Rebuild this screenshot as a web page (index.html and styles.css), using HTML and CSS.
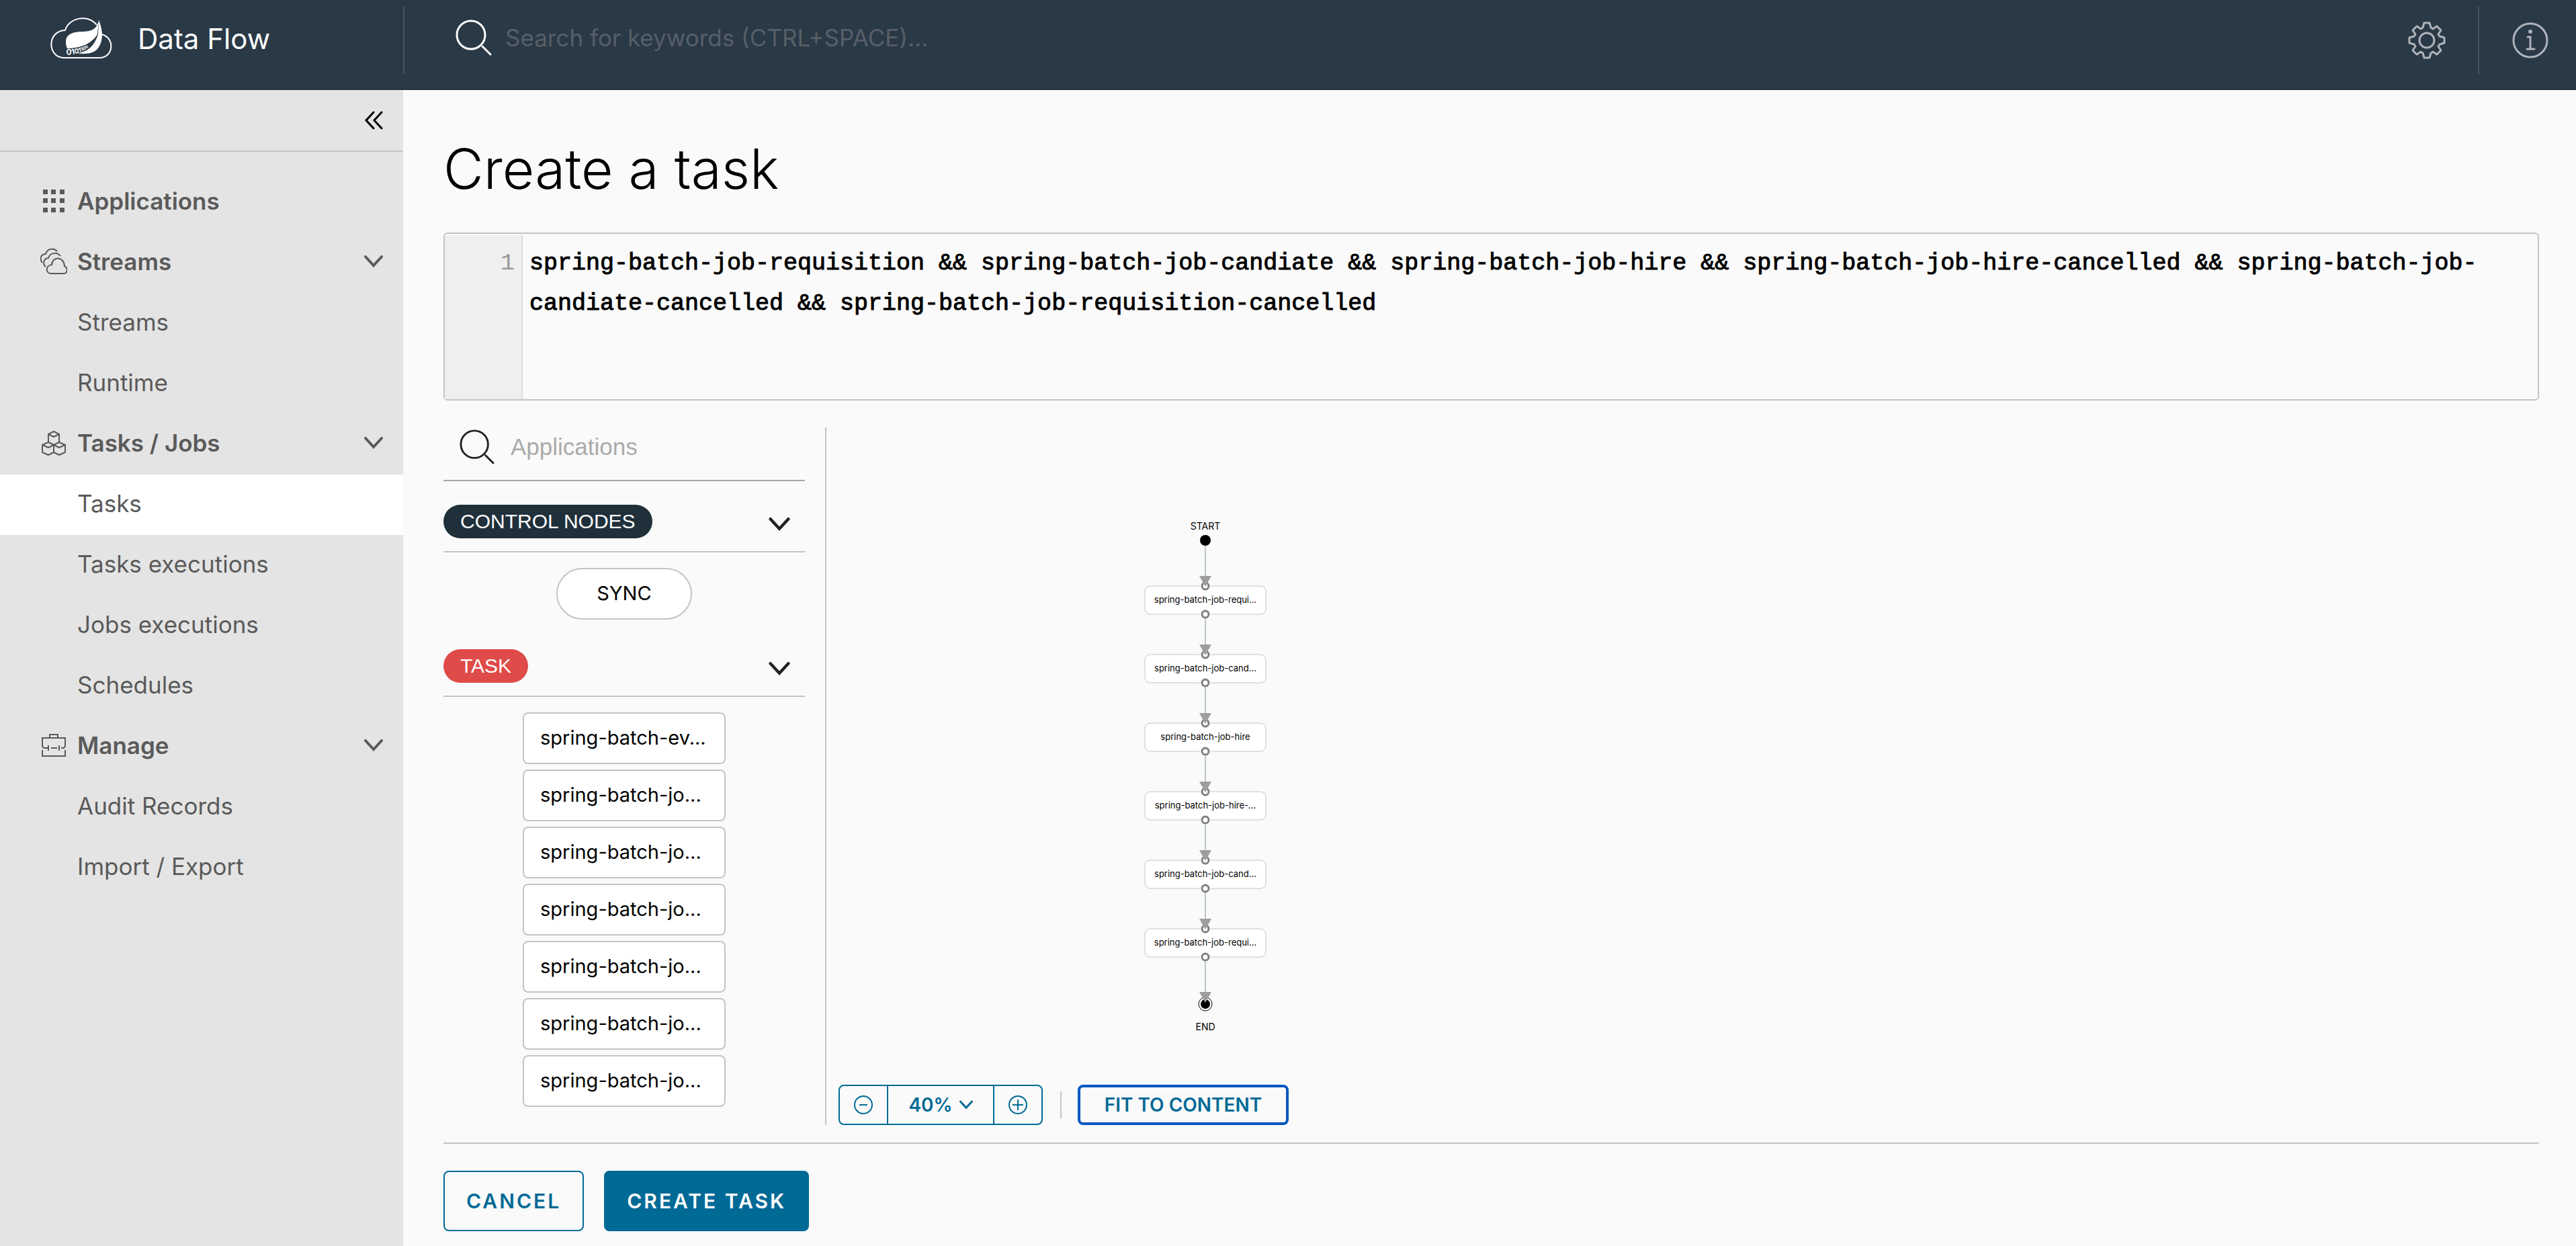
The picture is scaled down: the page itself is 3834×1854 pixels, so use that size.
FILE: index.html
```html
<!DOCTYPE html>
<html lang="en">
<head>
<meta charset="utf-8">
<title>Data Flow - Create a task</title>
<link rel="stylesheet" href="styles.css">
</head>
<body>
<svg class="defs" aria-hidden="true">
  <symbol id="chevron" viewBox="0 0 28 18"><path d="M2 2 14 15 26 2" fill="none" stroke="currentColor" stroke-width="4" stroke-linecap="round"/></symbol>
  <symbol id="magnifier" viewBox="0 0 54 54"><circle cx="23" cy="23" r="21" fill="none" stroke="currentColor" stroke-width="3"/><path d="M40 40 52 52" stroke="currentColor" stroke-width="3" stroke-linecap="round"/></symbol>
</svg>

<header class="header">
  <a class="brand" href="#">
    <svg class="brand-logo" viewBox="14 12 94 66" aria-hidden="true">
      <path d="M34 74C10 72 10 34 37 33 42 15 70 8 84 25M91 39C112 44 109 74 88 74H34" fill="none" stroke="#fff" stroke-width="2"/>
      <path d="M87 18C84 31 78 34 65 35 50 35 38 38 38 50 38 55 39 58 40 60 58 60 76 54 85 39Z" fill="#fff"/>
      <path d="M87 18C94 34 94 52 84 62 77 68 66 69 55 67 72 65 81 55 86 39Z" fill="#fff"/>
      <path id="digits" d="M39 70C60 69 76 59 85 42" fill="none"/>
      <text class="brand-digits"><textPath href="#digits"><tspan font-size="12">0</tspan><tspan font-size="11">1</tspan><tspan font-size="10">0</tspan><tspan font-size="9">1</tspan><tspan font-size="8">1</tspan><tspan font-size="7">0</tspan><tspan font-size="6">0</tspan></textPath></text>
    </svg>
    <span>Data Flow</span>
  </a>
  <form class="search">
    <label for="keywords"><svg class="search-icon" aria-label="Search"><use href="#magnifier"/></svg></label>
    <input id="keywords" type="text" placeholder="Search for keywords (CTRL+SPACE)...">
  </form>
  <div class="header-actions">
    <button class="header-button" aria-label="Settings">
      <svg viewBox="-28 -28 56 56"><g fill="none" stroke="currentColor" stroke-width="3" stroke-linejoin="round"><circle r="11"/><path d="M-4-26H4L6-19 9-17 15-21 21-15 17-9 19-6 26-4V4L19 6 17 9 21 15 15 21 9 17 6 19 4 26H-4L-6 19-9 17-15 21-21 15-17 9-19 6-26 4V-4L-19-6-17-9-21-15-15-21-9-17-6-19Z"/></g></svg>
    </button>
    <button class="header-button" aria-label="Information">
      <svg viewBox="-28 -28 56 56"><g fill="none" stroke="currentColor" stroke-width="3" stroke-linecap="round"><circle r="25"/><path d="M-4-5H0V13M-5 13H6"/></g><circle cy="-13" r="3" fill="currentColor"/></svg>
    </button>
  </div>
</header>

<div class="layout">
  <nav class="sidebar">
    <div class="sidebar-top">
      <button class="collapse" aria-label="Collapse menu"><svg viewBox="0 0 28 28"><path d="M14 2 3 14 14 26M26 2 15 14 26 26" fill="none" stroke="currentColor" stroke-width="3" stroke-linecap="round"/></svg></button>
    </div>
    <div class="menu">
      <a class="menu-group" href="#">
        <svg viewBox="0 0 40 40"><path d="M4 3h7v7H4zM16 3h7v7h-7zM29 3h7v7h-7zM4 16h7v7H4zM16 16h7v7h-7zM29 16h7v7h-7zM4 30h7v7H4zM16 30h7v7h-7zM29 30h7v7h-7z" fill="currentColor"/></svg>
        <span>Applications</span>
      </a>
      <button class="menu-group">
        <svg viewBox="0 0 40 40"><g fill="none" stroke="currentColor" stroke-width="2"><path d="M3 22C-1 17 0 9 8 9 10 1 20-1 25 5M8 28C3 24 5 15 12 15 14 7 25 5 30 12"/><path d="M16 38C8 38 7 26 17 25 18 12 35 12 36 27 42 30 40 38 35 38Z"/></g></svg>
        <span>Streams</span><svg class="chevron"><use href="#chevron"/></svg>
      </button>
      <a class="menu-item" href="#">Streams</a>
      <a class="menu-item" href="#">Runtime</a>
      <button class="menu-group">
        <svg viewBox="0 0 40 40"><g fill="none" stroke="currentColor" stroke-width="2" stroke-linejoin="round"><path d="M20 3 28 7V19L20 23 12 19V7ZM12 7 20 11 28 7M12 19 20 23V34L12 38 3 34V23ZM3 23 12 27 20 23M28 19 37 23V34L28 38 20 34V23ZM20 23 28 27 37 23"/></g></svg>
        <span>Tasks / Jobs</span><svg class="chevron"><use href="#chevron"/></svg>
      </button>
      <a class="menu-item active" href="#">Tasks</a>
      <a class="menu-item" href="#">Tasks executions</a>
      <a class="menu-item" href="#">Jobs executions</a>
      <a class="menu-item" href="#">Schedules</a>
      <button class="menu-group">
        <svg viewBox="0 0 40 40"><path d="M14 8V4H26V8M12 24H7Q3 24 3 20V9H37V20Q37 24 33 24H31M3 27V36H37V27M12 20V28M28 20V28M16 24H25" fill="none" stroke="currentColor" stroke-width="2"/></svg>
        <span>Manage</span><svg class="chevron"><use href="#chevron"/></svg>
      </button>
      <a class="menu-item" href="#">Audit Records</a>
      <a class="menu-item" href="#">Import / Export</a>
    </div>
  </nav>

  <main class="content">
    <h1>Create a task</h1>
    <div class="editor">
      <div class="gutter">1</div>
      <textarea aria-label="Task definition" spellcheck="false">spring-batch-job-requisition &amp;&amp; spring-batch-job-candiate &amp;&amp; spring-batch-job-hire &amp;&amp; spring-batch-job-hire-cancelled &amp;&amp; spring-batch-job-candiate-cancelled &amp;&amp; spring-batch-job-requisition-cancelled</textarea>
    </div>

    <div class="workspace">
      <aside class="palette">
        <div class="palette-search">
          <label for="filter"><svg class="filter-icon" aria-label="Filter"><use href="#magnifier"/></svg></label>
          <input id="filter" type="text" placeholder="Applications">
        </div>
        <button class="palette-group"><span class="pill">CONTROL NODES</span><svg class="chevron"><use href="#chevron"/></svg></button>
        <div class="palette-items">
          <button class="node sync">SYNC</button>
        </div>
        <button class="palette-group"><span class="pill task">TASK</span><svg class="chevron"><use href="#chevron"/></svg></button>
        <div class="palette-items">
          <button class="node">spring-batch-ev...</button>
          <button class="node">spring-batch-jo...</button>
          <button class="node">spring-batch-jo...</button>
          <button class="node">spring-batch-jo...</button>
          <button class="node">spring-batch-jo...</button>
          <button class="node">spring-batch-jo...</button>
          <button class="node">spring-batch-jo...</button>
        </div>
      </aside>

      <section class="canvas">
        <svg class="graph" role="img" aria-label="Task graph">
          <defs>
            <g id="box">
              <rect class="box" x="-90" width="180" height="42" rx="8"/>
              <circle class="halo" r="8"/><circle class="port" r="5"/>
              <circle class="halo" cy="42" r="8"/><circle class="port" cy="42" r="5"/>
              <path class="link" d="M0-54V-12"/><path class="arrow" d="M-9-15H9L0 1Z"/>
            </g>
          </defs>
          <g transform="translate(564 0)">
            <text y="152">START</text>
            <path class="link" d="M0 168V236"/>
            <circle cy="168" r="8"/>
            <g class="task-node" transform="translate(0 236)"><use href="#box"/><text y="25">spring-batch-job-requi...</text></g>
            <g class="task-node" transform="translate(0 338)"><use href="#box"/><text y="25">spring-batch-job-cand...</text></g>
            <g class="task-node" transform="translate(0 440)"><use href="#box"/><text y="25">spring-batch-job-hire</text></g>
            <g class="task-node" transform="translate(0 542)"><use href="#box"/><text y="25">spring-batch-job-hire-...</text></g>
            <g class="task-node" transform="translate(0 644)"><use href="#box"/><text y="25">spring-batch-job-cand...</text></g>
            <g class="task-node" transform="translate(0 746)"><use href="#box"/><text y="25">spring-batch-job-requi...</text></g>
            <path class="link" d="M0 794V846"/>
            <circle class="end-ring" cy="858" r="10"/><circle cy="858" r="7"/>
            <path class="arrow" d="M-9 840H9L0 856Z"/>
            <text y="897">END</text>
          </g>
        </svg>
        <div class="toolbar">
          <div class="zoom">
            <button aria-label="Zoom out"><svg class="zoom-icon" viewBox="0 0 28 28"><path d="M8 14H20" /><circle cx="14" cy="14" r="13"/></svg></button>
            <button class="level">40% <svg class="level-chevron"><use href="#chevron"/></svg></button>
            <button aria-label="Zoom in"><svg class="zoom-icon" viewBox="0 0 28 28"><path d="M6 14H22M14 6V22"/><circle cx="14" cy="14" r="13"/></svg></button>
          </div>
          <span class="separator"></span>
          <button class="fit">FIT TO CONTENT</button>
        </div>
      </section>
    </div>

    <footer class="actions">
      <button class="action">CANCEL</button>
      <button class="action primary">CREATE TASK</button>
    </footer>
  </main>
</div>
</body>
</html>
```

FILE: styles.css
```css
* { box-sizing: border-box; }

body {
  margin: 0;
  min-height: 100vh;
  display: flex;
  flex-direction: column;
  background: #fafafa;
  color: #000;
  font-family: Inter, sans-serif;
  font-size: 35px;
}

button, input, textarea { font: inherit; color: inherit; background: none; border: 0; padding: 0; margin: 0; }
a { color: inherit; text-decoration: none; }
svg { display: block; flex: none; }
.defs { position: absolute; width: 0; height: 0; }

/* Header */
.header {
  display: flex;
  height: 134px;
  padding-top: 10px;
  background: #2a3946;
  border-bottom: 1px solid #22303c;
}
.brand {
  display: flex;
  align-items: center;
  gap: 37px;
  width: 602px;
  height: 100px;
  padding: 0 0 6px 74px;
  border-right: 2px solid #485562;
  color: #fff;
  font-size: 42px;
}
.brand-logo { width: 94px; height: 66px; }
.brand-digits { fill: #fff; font-weight: 700; }
.search {
  display: flex;
  flex: 1;
  align-items: center;
  gap: 20px;
  height: 92px;
  padding-left: 76px;
}
.search-icon { width: 54px; height: 54px; color: #fff; }
.search input { flex: 1; height: 60px; outline: 0; }
.search input::placeholder { color: #565f66; opacity: 1; }
.header-actions { display: flex; height: 100px; }
.header-button {
  display: grid;
  place-items: center;
  width: 152px;
  color: #adb3b9;
}
.header-button + .header-button { width: 146px; padding-left: 8px; border-left: 2px solid #485562; }
.header-button svg { width: 56px; height: 56px; }

/* Sidebar */
.layout { display: flex; flex: 1; }
.sidebar { width: 600px; flex: none; background: #e4e4e4; color: #5a5a5a; }
.sidebar-top {
  display: flex;
  align-items: center;
  justify-content: flex-end;
  height: 92px;
  padding-right: 30px;
  border-bottom: 2px solid #c4c4c4;
  color: #000;
}
.collapse svg { width: 28px; height: 28px; }
.menu { padding-top: 30px; }
.menu-group, .menu-item {
  display: flex;
  align-items: center;
  width: 100%;
  height: 90px;
  padding: 0 30px 4px 60px;
  text-align: left;
}
.menu-group { gap: 15px; font-weight: 600; }
.menu-group > svg:first-child { width: 40px; height: 40px; }
.menu-item { padding-left: 115px; }
.menu-item.active { background: #fff; }
.chevron { width: 28px; height: 18px; margin-left: auto; }

/* Main column */
.content { flex: 1; min-width: 0; padding: 72px 55px 22px 60px; }
h1 { margin: 0; font-size: 82px; font-weight: 300; line-height: 92px; }
.editor {
  display: flex;
  height: 250px;
  margin-top: 48px;
  border: 2px solid #c4c4c4;
  border-radius: 6px;
  font-family: "Liberation Mono", monospace;
  font-size: 35px;
  line-height: 60px;
}
.gutter {
  width: 116px;
  padding: 12px 10px 0 0;
  margin-top: 2px;
  background: #efefef;
  border-right: 2px solid #ddd;
  color: #999;
  text-align: right;
}
.editor textarea {
  flex: 1;
  padding: 14px 6px 0 10px;
  resize: none;
  outline: 0;
  overflow: hidden;
  -webkit-text-stroke: 1px #000;
}

.workspace { display: flex; margin-top: 40px; }
.palette { width: 570px; padding: 0 30px 4px 0; border-right: 2px solid #c4c4c4; }
.palette-search {
  display: flex;
  align-items: center;
  gap: 24px;
  height: 80px;
  padding: 0 0 20px 24px;
  border-bottom: 2px solid #a6a6a6;
  font-family: "Liberation Sans", sans-serif;
}
.palette-search input { flex: 1; min-width: 0; outline: 0; }
.palette-search input::placeholder { color: #aaa; opacity: 1; }
.filter-icon { width: 52px; height: 52px; color: #222; }
.palette-group {
  display: flex;
  align-items: center;
  width: 100%;
  height: 106px;
  padding: 16px 22px 0 0;
  border-bottom: 2px solid #c4c4c4;
  color: #222;
}
.palette-group .chevron { width: 32px; height: 20px; margin-top: 8px; }
.palette-items + .palette-group { height: 92px; padding-top: 2px; }
.pill {
  padding: 0 25px;
  border-radius: 25px;
  background: #20303a;
  color: #fff;
  font-family: "Liberation Sans", sans-serif;
  font-size: 30px;
  line-height: 50px;
}
.pill.task { background: #de4b48; }
.palette-items {
  display: flex;
  flex-direction: column;
  align-items: center;
  gap: 8px;
  padding: 23px 0;
  font-size: 29px;
}
.node {
  width: 302px;
  height: 77px;
  padding: 0 0 2px 24px;
  background: #fff;
  border: 2px solid #c4c4c4;
  border-radius: 8px;
  text-align: left;
  white-space: nowrap;
}
.node.sync { width: 202px; padding-left: 0; border-radius: 39px; text-align: center; }

/* Graph canvas */
.canvas { display: flex; flex: 1; flex-direction: column; min-width: 0; }
.graph { flex: 1; width: 100%; font-size: 14px; text-anchor: middle; }
.task-node { font-size: 13px; }
.link { stroke: #b9c6ca; stroke-width: 2; }
.arrow { fill: #9e9e9e; }
.box { fill: #fff; stroke: #c4c4c4; }
.halo { fill: #fafafa; }
.port { fill: #fff; stroke: #808080; stroke-width: 3; }
.end-ring { fill: #fff; stroke: #000; }
.toolbar {
  display: flex;
  align-items: center;
  padding-left: 18px;
  color: #006a96;
  font-size: 28px;
  font-weight: 600;
  letter-spacing: 3px;
}
.zoom { display: flex; height: 60px; border: 2px solid #006a96; border-radius: 8px; }
.zoom button { display: flex; align-items: center; justify-content: center; width: 70px; }
.zoom .level { width: 160px; gap: 10px; border: solid #006a96; border-width: 0 2px; }
.zoom-icon { width: 28px; height: 28px; fill: none; stroke: #006a96; stroke-width: 2; }
.level-chevron { width: 20px; height: 14px; }
.separator { width: 2px; height: 40px; margin: 0 24px 0 26px; background: #c4c4c4; }
.fit { height: 60px; width: 314px; border: 4px solid #0057c2; border-radius: 8px; }

.actions { display: flex; gap: 30px; margin-top: 26px; padding-top: 40px; border-top: 2px solid #c4c4c4; }
.action {
  height: 90px;
  padding: 0 32px;
  border: 2px solid #006a96;
  border-radius: 8px;
  color: #006a96;
  font-size: 30px;
  font-weight: 600;
  letter-spacing: 3px;
}
.action.primary { background: #006a96; color: #fff; }
```
